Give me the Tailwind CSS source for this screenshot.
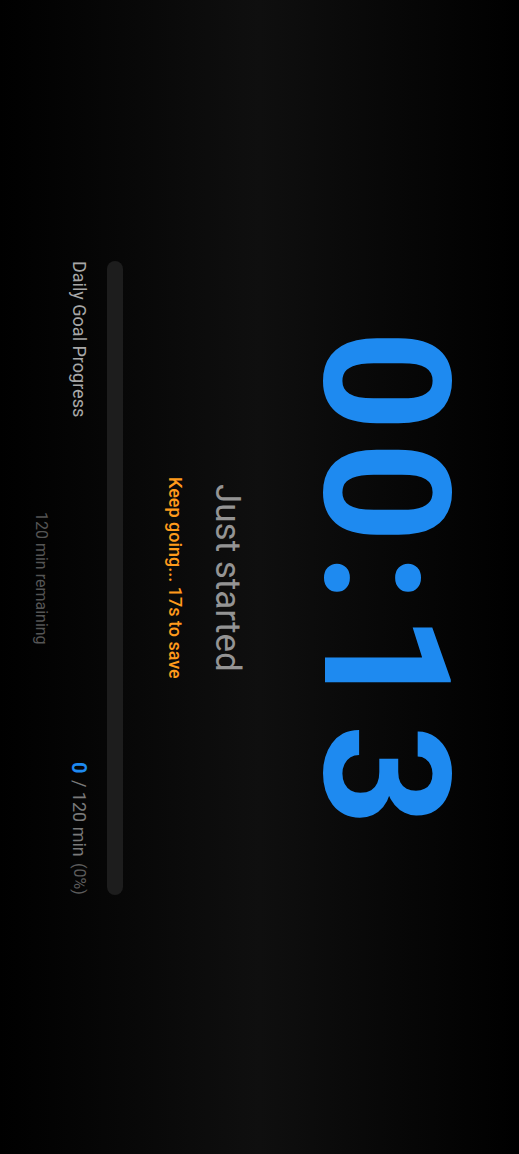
<!DOCTYPE html>
<html lang="en">
<head>
<meta charset="utf-8">
<meta name="viewport" content="width=device-width, initial-scale=1">
<title>Reading Timer</title>
<script src="https://cdn.jsdelivr.net/npm/@tailwindcss/browser@4"></script>
</head>
<body class="bg-black font-[Roboto,sans-serif]">
<main class="flex h-screen w-full flex-col items-center justify-center bg-linear-to-r/srgb from-black via-[#0f0f0f] to-black pt-0.5 pr-3.5 [writing-mode:vertical-rl]">
  <time class="pt-2.5 text-[177px] leading-[180px] font-bold tracking-[10px] text-[#1e8af0]" datetime="PT13S">00:13</time>
  <h1 class="mr-12 text-[35px] leading-[40px] text-[#949494]">Just started</h1>
  <p class="mr-5 text-lg leading-6 font-medium text-[#ff9a1c]">Keep going... 17s to save</p>
  <section class="mr-10 flex h-[55%] flex-col">
    <progress id="goal" class="block h-full w-4 appearance-none overflow-hidden rounded-full bg-[#1d1d1d] [&::-webkit-progress-bar]:bg-[#1d1d1d] [&::-webkit-progress-value]:bg-[#1e8af0]" value="0" max="120"></progress>
    <div class="mr-4 flex items-baseline justify-between text-lg leading-6">
      <label for="goal" class="text-[#a8a8a8]">Daily Goal Progress</label>
      <p class="text-[#7a7a7a]"><strong class="me-0.5 text-xl leading-6 font-bold text-[#1e8af0]">0</strong> / 120 min <span class="ms-0.5 text-base leading-6 text-[#5c5c5c]">(0%)</span></p>
    </div>
    <p class="mr-4 text-center text-base leading-5 text-[#555555]">120 min remaining</p>
  </section>
</main>
</body>
</html>
